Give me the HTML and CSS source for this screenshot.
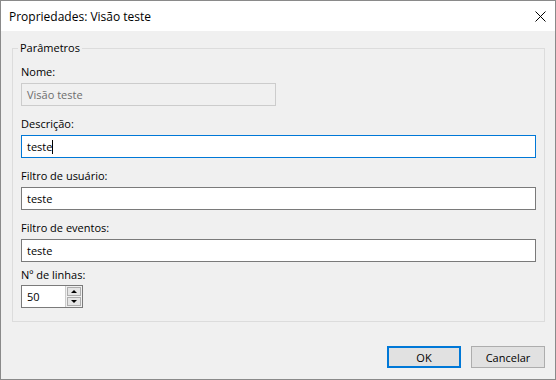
FILE: index.html
```html
<!DOCTYPE html>
<html lang="pt">
<head>
  <meta charset="UTF-8">
  <title>Propriedades: Visão teste</title>
  <link rel="stylesheet" href="styles.css">
</head>
<body>
  <div class="window">
    <!-- Title bar -->
    <div class="titlebar">
      <span class="title">Propriedades: Visão teste</span>
      <svg class="close" width="11" height="11" viewBox="0 0 11 11">
        <path d="M0.5 0.5 L10.5 10.5 M10.5 0.5 L0.5 10.5" stroke="#000" stroke-width="1"/>
      </svg>
    </div>

    <div class="content">
      <fieldset class="group">
        <legend>Parâmetros</legend>

        <div class="field">
          <label>Nome:</label>
          <div class="textbox short disabled">Visão teste</div>
        </div>

        <div class="field">
          <label>Descrição:</label>
          <div class="textbox focused">teste<span class="caret"></span></div>
        </div>

        <div class="field">
          <label>Filtro de usuário:</label>
          <div class="textbox">teste</div>
        </div>

        <div class="field">
          <label>Filtro de eventos:</label>
          <div class="textbox">teste</div>
        </div>

        <div class="field last">
          <label>Nº de linhas:</label>
          <div class="spin">
            <div class="spin-value">50</div>
            <div class="spin-buttons">
              <div class="spin-btn"><span class="arrow up"></span></div>
              <div class="spin-btn"><span class="arrow down"></span></div>
            </div>
          </div>
        </div>
      </fieldset>

      <div class="actions">
        <button class="btn default">OK</button>
        <button class="btn">Cancelar</button>
      </div>
    </div>
  </div>
</body>
</html>
```

FILE: styles.css
```css
* { box-sizing: border-box; }

body {
  margin: 0;
  background: #fff;
  font-family: 'Open Sans', 'Noto Sans', sans-serif;
  font-size: 11px;
  color: #000;
}

.window {
  width: 556px;
  height: 380px;
  border: 1px solid #8a8a8a;
  display: flex;
  flex-direction: column;
}

.titlebar {
  height: 30px;
  background: #fff;
  display: flex;
  align-items: center;
  justify-content: space-between;
  padding: 0 9px 0 8px;
}

.title {
  font-size: 12px;
}

.content {
  flex: 1;
  background: #f0f0f0;
  padding: 9px 10px 0 11px;
  display: flex;
  flex-direction: column;
}

.group {
  margin: 0;
  height: 282px;
  border: 1px solid #dcdcdc;
  padding: 8px 8px 0 8px;
}

.group legend {
  line-height: 16px;
  padding: 0 2px;
  margin-left: -3px;
}

.field {
  display: flex;
  flex-direction: column;
  gap: 3px;
  margin-bottom: 10px;
}

.field.last {
  margin-top: -5px;
  gap: 2px;
}

label {
  line-height: 16px;
}

.textbox {
  height: 23px;
  border: 1px solid #7a7a7a;
  background: #fff;
  padding-left: 5px;
  display: flex;
  align-items: center;
}

.textbox.short {
  width: 255px;
}

.textbox.disabled {
  background: #f0f0f0;
  border-color: #cccccc;
  color: #6d6d6d;
}

.textbox.focused {
  border-color: #0078d7;
}

.caret {
  width: 1px;
  height: 14px;
  background: #000;
}

.spin {
  width: 62px;
  height: 23px;
  display: flex;
  border: 1px solid #7a7a7a;
  background: #fff;
}

.spin-value {
  flex: 1;
  padding-left: 5px;
  display: flex;
  align-items: center;
}

.spin-buttons {
  width: 17px;
  display: flex;
  flex-direction: column;
  gap: 1px;
  padding: 1px;
  background: #f0f0f0;
  border-left: 1px solid #cccccc;
}

.spin-btn {
  flex: 1;
  border: 1px solid #adadad;
  background: #e5e5e5;
  display: flex;
  align-items: center;
  justify-content: center;
}

.arrow {
  width: 0;
  height: 0;
  border-left: 3px solid transparent;
  border-right: 3px solid transparent;
}

.arrow.up {
  border-bottom: 3px solid #000;
}

.arrow.down {
  border-top: 3px solid #000;
}

.actions {
  display: flex;
  justify-content: flex-end;
  gap: 10px;
  margin-top: 24px;
}

.btn {
  width: 74px;
  height: 22px;
  border: 1px solid #adadad;
  background: #e1e1e1;
  font-family: inherit;
  font-size: 11px;
  color: #000;
  padding: 0;
}

.btn.default {
  border: 2px solid #0078d7;
}
```
